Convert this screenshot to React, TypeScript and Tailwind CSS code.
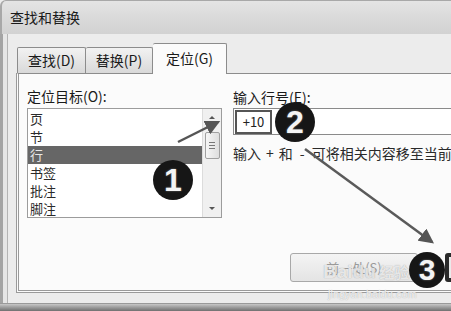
const targets = ["页", "节", "行", "书签", "批注", "脚注"];

const Badge = ({ n, pos }: { n: number; pos: string }) => (
  <div
    className={`absolute flex items-center justify-center rounded-full bg-[#161616] text-[#f4f4f4] font-bold leading-none font-['Liberation_Sans',sans-serif] [text-shadow:0_0_2px_#777] ${pos}`}
  >
    {n}
  </div>
);

const App = () => {
  return (
    <div className="relative w-[451px] h-[311px] overflow-hidden bg-[#ececec] text-[#1a1a1a] font-['Noto_Sans_CJK_SC','Noto_Sans',sans-serif]">
      {/* title bar */}
      <div className="h-[34px] flex items-center pl-[8px] rounded-tl-[6px] border-l-2 border-t border-[#a8a8a8] bg-linear-to-b from-[#e4e4e4] via-[#dadada] to-[#d2d2d2]">
        <span className="text-[14px] text-[#1a1a1a]">查找和替换</span>
      </div>

      <div className="flex h-[277px]">
        {/* left window frame */}
        <div className="shrink-0 w-[8px] border-l-[3px] border-[#a4a4a4] bg-[#e6e6e6] border-r border-r-[#b4b4b4]" />

        <div className="shrink-0 flex flex-col pl-[8px] pt-[9px]">
          {/* tabs */}
          <div className="flex items-end h-[30px] pl-[1px]">
            <div className="h-[26px] w-[69px] flex items-center justify-center border border-b-0 border-[#8c8c8c] rounded-t-[2px] bg-linear-to-b from-[#f2f2f2] to-[#d9d9d9] text-[14px]">
              查找(D)
            </div>
            <div className="h-[26px] w-[67px] flex items-center justify-center border border-l-0 border-b-0 border-[#8c8c8c] rounded-t-[2px] bg-linear-to-b from-[#f2f2f2] to-[#d9d9d9] text-[14px]">
              替换(P)
            </div>
            <div className="relative z-10 h-[31px] -mb-[1px] w-[74px] flex items-center justify-center border border-l-0 border-b-0 border-[#8c8c8c] rounded-t-[2px] bg-[#fbfbfb] text-[14px] pb-[2px]">
              定位(G)
            </div>
          </div>

          {/* tab panel */}
          <div className="w-[470px] h-[220px] flex gap-[11px] pl-[8px] pt-[13px] border-t border-[#8c8c8c] border-l-[3px] border-b-[3px] border-double border-l-[#9a9a9a] border-b-[#9a9a9a] bg-[#fbfbfb]">
            <div className="shrink-0 flex flex-col w-[195px]">
              <div className="h-[21px] text-[14px] leading-[18px]">定位目标(O):</div>
              <div className="flex h-[110px] border border-[#9c9c9c] bg-white">
                <div className="flex-1 flex flex-col pt-[1px]">
                  {targets.map((t) => (
                    <div
                      key={t}
                      className={`h-[18px] pl-[2px] text-[13px] leading-[18px] ${
                        t === "行" ? "bg-[#666] text-[#e8e8e8]" : "text-[#2a2a2a]"
                      }`}
                    >
                      {t}
                    </div>
                  ))}
                </div>
                <div className="w-[19px] flex flex-col items-center justify-between bg-[#f0f0f0] border-l border-[#dcdcdc] py-[4px]">
                  <div className="w-0 h-0 border-x-[3px] border-x-transparent border-b-[3px] border-b-[#555] mt-[3px]" />
                  <div className="w-[15px] h-[27px] -mt-[36px] rounded-[2px] border border-[#a0a0a0] bg-linear-to-r from-[#f6f6f6] to-[#dedede] flex flex-col items-center justify-center gap-[2px]">
                    <div className="w-[6px] h-px bg-[#777]" />
                    <div className="w-[6px] h-px bg-[#777]" />
                    <div className="w-[6px] h-px bg-[#777]" />
                  </div>
                  <div className="w-0 h-0 border-x-[3px] border-x-transparent border-t-[3px] border-t-[#555] mb-[3px]" />
                </div>
              </div>
            </div>

            <div className="flex flex-col">
              <div className="h-[21px] text-[14px] leading-[18px] pt-[1px]">输入行号(E):</div>
              <div className="w-[240px] h-[27px] border border-[#8a8a8a] bg-white flex items-center pl-[1px]">
                <div className="w-[37px] h-[24px] border-2 border-[#555] flex items-center justify-center text-[13px] text-[#222]">
                  +10
                </div>
              </div>
              <div className="mt-[10px] flex whitespace-nowrap text-[14px] text-[#2a2a2a] leading-[16px]">
                <span>输入</span>
                <span className="mx-[5px]">+</span>
                <span>和</span>
                <span className="mx-[7px]">-</span>
                <span>可将相关内容移至当前位置。</span>
              </div>
            </div>
          </div>
        </div>
      </div>

      {/* buttons row overlaps the lower panel area */}
      <div className="absolute left-[290px] top-[253px] flex gap-[27px]">
        <div className="w-[128px] h-[29px] rounded-[3px] border border-[#a8a8a8] bg-linear-to-b from-[#f4f4f4] to-[#e4e4e4] flex items-center justify-center text-[13px] text-[#9a9a9a]">
          前一处(S)
        </div>
        <div className="w-[40px] h-[29px] rounded-[3px] border-[4px] border-[#2a2a2a] bg-[#eaeaea]" />
      </div>

      {/* window bottom edge */}
      <div className="absolute left-0 right-0 top-[303px] h-[8px] border-t border-[#9a9a9a] bg-linear-to-b from-[#c8c8c8] to-[#707070]" />

      {/* watermark */}
      <div className="absolute left-[323px] top-[262px] text-[19px] font-bold text-white/75 font-['Liberation_Sans',sans-serif] [text-shadow:0_0_1px_#999] leading-none">
        Bai<span className="text-white/70">du</span>
        <span className="text-[15px] font-['Noto_Sans_CJK_SC',sans-serif]"> 经验</span>
      </div>
      <div className="absolute left-[328px] top-[289px] text-[11px] text-white/80 font-['Liberation_Sans',sans-serif] [text-shadow:0_0_1px_#999] leading-none">
        jingyan.baidu.com
      </div>

      {/* annotation arrows */}
      <svg className="absolute inset-0" width="451" height="311" viewBox="0 0 451 311">
        <defs>
          <marker id="head" markerWidth="6" markerHeight="6" refX="5" refY="3" orient="auto">
            <path d="M0,0 L6,3 L0,6 Z" fill="#555" />
          </marker>
        </defs>
        <line x1="178" y1="142" x2="218" y2="122" stroke="#555" strokeWidth="2.5" markerEnd="url(#head)" />
        <line x1="305" y1="149" x2="432" y2="242" stroke="#5a5a5a" strokeWidth="2.5" markerEnd="url(#head)" />
      </svg>

      <Badge n={1} pos="left-[153px] top-[160px] w-[40px] h-[40px] text-[32px]" />
      <Badge n={2} pos="left-[275px] top-[102px] w-[40px] h-[40px] text-[32px]" />
      <Badge n={3} pos="left-[409px] top-[252px] w-[36px] h-[36px] text-[30px]" />
    </div>
  );
};

export default App;
